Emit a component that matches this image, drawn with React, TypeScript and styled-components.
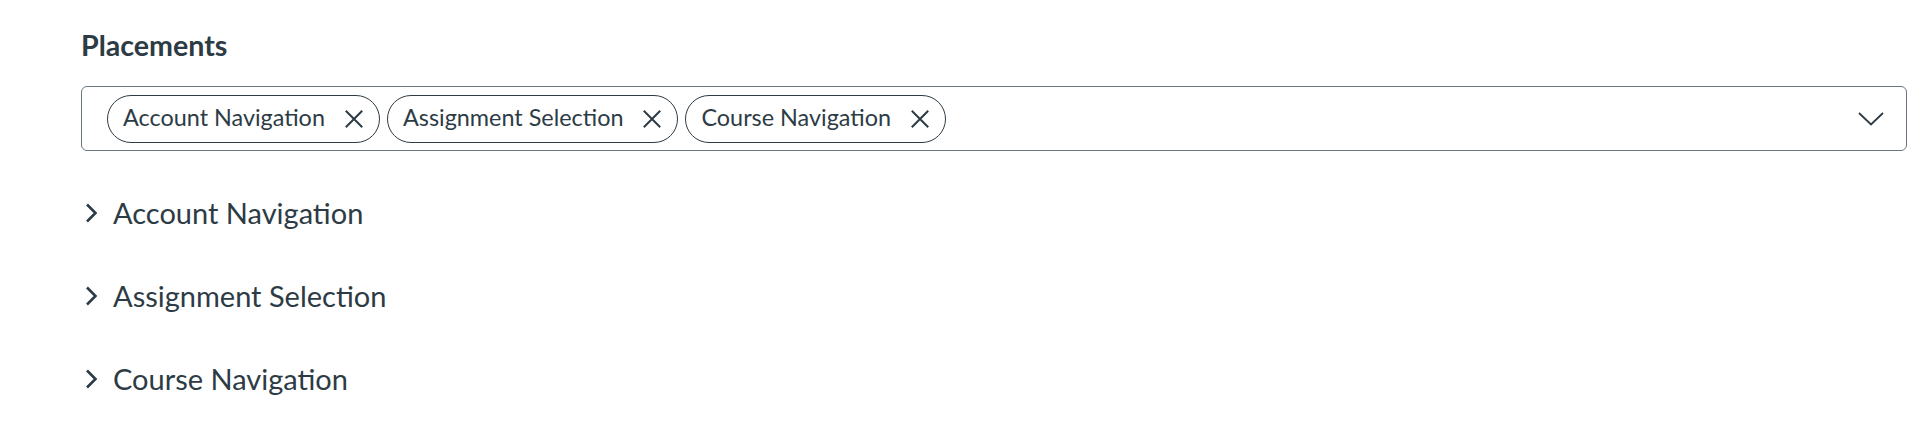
import React from "react";
import styled, { createGlobalStyle } from "styled-components";

const Global = createGlobalStyle`
  html, body { margin: 0; padding: 0; background: #ffffff; }
  body { font-family: Lato, "Noto Sans", sans-serif; color: #2d3b45; }
`;

const Page = styled.div`
  padding: 29px 17px 0 81px;
`;

const Heading = styled.h2`
  margin: 0;
  font-size: 28.6px;
  line-height: 32px;
  font-weight: 700;
`;

const SelectBox = styled.div`
  margin-top: 25px;
  box-sizing: border-box;
  height: 65px;
  border: 1px solid #6b7780;
  border-radius: 6px;
  display: flex;
  align-items: center;
  padding: 0 22px 0 25px;
  gap: 7px;
`;

const Chip = styled.span`
  box-sizing: border-box;
  height: 48px;
  border: 1px solid #2d3b45;
  border-radius: 24px;
  display: inline-flex;
  align-items: center;
  gap: 20px;
  padding: 0 16px 0 15px;
  color: #2d3b45;
  white-space: nowrap;
`;

const ChipLabel = styled.span`
  font-size: 23.4px;
  line-height: 28px;
  margin-bottom: 4px;
`;

const Spacer = styled.div`
  flex: 1;
`;

const Accordion = styled.div`
  margin-top: 20px;
  display: flex;
  flex-direction: column;
`;

const Row = styled.div`
  height: 83px;
  display: flex;
  align-items: center;
  gap: 15px;
  padding-left: 4px;
`;

const RowLabel = styled.span`
  font-size: 29px;
  color: #2d3b45;
`;

const XIcon = () => (
  <svg width="18" height="18" viewBox="0 0 18 18" fill="none">
    <path d="M1.5 1.5 L16.5 16.5 M16.5 1.5 L1.5 16.5" stroke="#2d3b45" strokeWidth="2" strokeLinecap="square" />
  </svg>
);

const ChevronDown = () => (
  <svg width="26" height="14" viewBox="0 0 26 14" fill="none">
    <path d="M1 1 L13 12.5 L25 1" stroke="#2d3b45" strokeWidth="1.8" />
  </svg>
);

const ChevronRight = () => (
  <svg width="13" height="20" viewBox="0 0 13 20" fill="none">
    <path d="M2 1.5 L10.5 10 L2 18.5" stroke="#2d3b45" strokeWidth="2.6" />
  </svg>
);

const items = ["Account Navigation", "Assignment Selection", "Course Navigation"];

export default function App() {
  return (
    <Page>
      <Global />
      <Heading>Placements</Heading>
      <SelectBox>
        {items.map((t) => (
          <Chip key={t}>
            <ChipLabel>{t}</ChipLabel>
            <XIcon />
          </Chip>
        ))}
        <Spacer />
        <ChevronDown />
      </SelectBox>
      <Accordion>
        {items.map((t) => (
          <Row key={t}>
            <ChevronRight />
            <RowLabel>{t}</RowLabel>
          </Row>
        ))}
      </Accordion>
    </Page>
  );
}
